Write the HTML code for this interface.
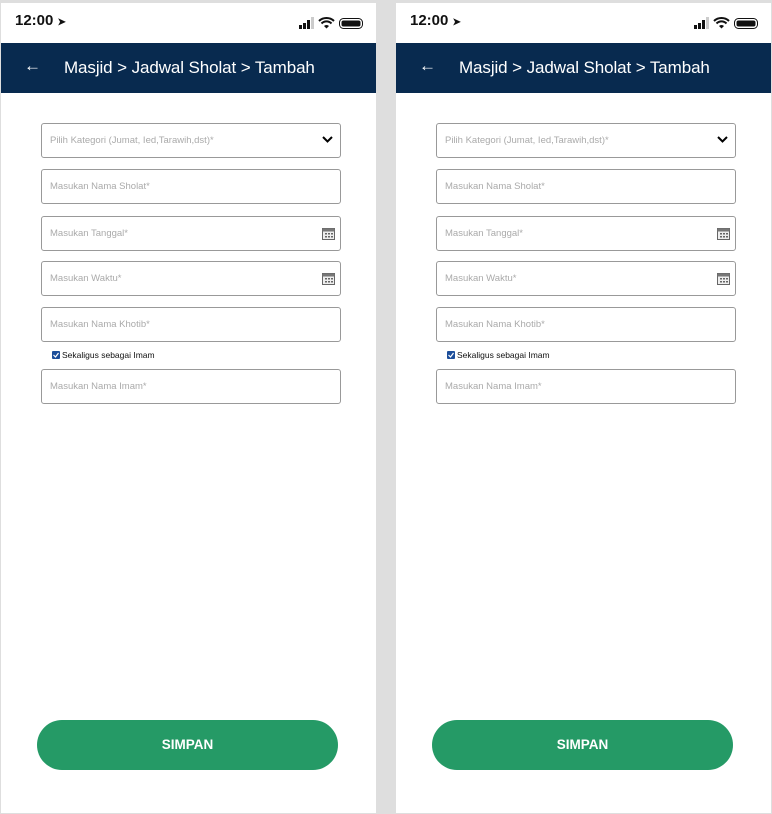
<!DOCTYPE html><html><head><style>
*{margin:0;padding:0;box-sizing:border-box}
body{width:772px;height:814px;background:#dedede;position:relative;overflow:hidden;font-family:"Liberation Sans",sans-serif}
.p{position:absolute;top:3px;width:375px;height:810px;background:#fff}
.sb{position:absolute;top:0;left:0;right:0;height:40px}
.time{position:absolute;left:14px;top:9px;font-weight:bold;font-size:15px;color:#111}
.hd{position:absolute;top:40px;left:0;right:0;height:50px;background:#082a4f;color:#fff}
.hd .t{position:absolute;left:63px;top:15px;font-size:17px;letter-spacing:-0.1px}
.hd .b{position:absolute;left:23px;top:13px;font-size:17px}
.f{position:absolute;left:40px;width:300px;height:35px;border:1px solid #999;border-radius:3px;font-size:9.5px;color:#aaa;padding-left:8px;line-height:33px}
.ic{position:absolute;right:5px;top:10px}
.cb{position:absolute;left:51px;top:347px;font-size:8.5px;color:#111}
.cb i{display:inline-block;width:8px;height:8px;background:#1c4e9a;border-radius:1px;vertical-align:-1px;margin-right:2px;position:relative}
.btn{position:absolute;left:36px;top:717px;width:301px;height:50px;background:#259a66;border-radius:25px;color:#fff;font-weight:bold;font-size:13.5px;text-align:center;line-height:50px}
</style></head><body>
<div class="p" style="left:1px" id="a"></div>
<div class="p" style="left:396px"></div>
<script>
var h='<div class="sb"><div class="time">12:00 <span style="font-size:10px">➤</span></div><svg style="position:absolute;left:298px;top:12px" width="66" height="16"><rect x="0" y="10" width="3" height="4" fill="#111"/><rect x="4" y="8" width="3" height="6" fill="#111"/><rect x="8" y="5" width="3" height="9" fill="#111"/><rect x="12" y="2" width="3" height="12" fill="#ccc"/><path d="M20 6a11 11 0 0 1 15 0M22.5 8.5a7 7 0 0 1 10 0" stroke="#111" stroke-width="2" fill="none"/><path d="M25 11l2.5 2.5l2.5-2.5a3.5 3.5 0 0 0-5 0z" fill="#111"/><rect x="40.5" y="3.5" width="23" height="10" rx="4" fill="none" stroke="#111" stroke-width="1"/><rect x="42.5" y="5.5" width="19" height="6" rx="2" fill="#111"/></svg></div><div class="hd"><div class="b">←</div><div class="t">Masjid &gt; Jadwal Sholat &gt; Tambah</div></div>';
var cal='<svg class="ic" width="13" height="13"><rect x="0.5" y="1.5" width="12" height="11" fill="#eee" stroke="#666"/><rect x="0.5" y="1.5" width="12" height="3" fill="#777"/><g fill="#666"><rect x="3" y="6" width="2" height="1.5"/><rect x="6" y="6" width="2" height="1.5"/><rect x="9" y="6" width="2" height="1.5"/><rect x="3" y="9" width="2" height="1.5"/><rect x="6" y="9" width="2" height="1.5"/><rect x="9" y="9" width="2" height="1.5"/></g></svg>';
var f=[[120,'Pilih Kategori (Jumat, Ied,Tarawih,dst)*','<svg class="ic" style="top:12px;right:7px" width="11" height="8"><path d="M1 1l4.5 4.5L10 1" stroke="#000" stroke-width="2" fill="none"/></svg>'],[166,'Masukan Nama Sholat*',''],[213,'Masukan Tanggal*',cal],[258,'Masukan Waktu*',cal],[304,'Masukan Nama Khotib*',''],[366,'Masukan Nama Imam*','']];
f.forEach(function(x){h+='<div class="f" style="top:'+x[0]+'px">'+x[1]+x[2]+'</div>'});
h+='<div class="cb"><i><svg style="position:absolute;left:1px;top:1px" width="6" height="6"><path d="M0.5 3l2 2l3-4" stroke="#fff" stroke-width="1.2" fill="none"/></svg></i>Sekaligus sebagai Imam</div><div class="btn">SIMPAN</div>';
document.querySelectorAll('.p').forEach(function(p){p.innerHTML=h});
</script>
</body></html>
